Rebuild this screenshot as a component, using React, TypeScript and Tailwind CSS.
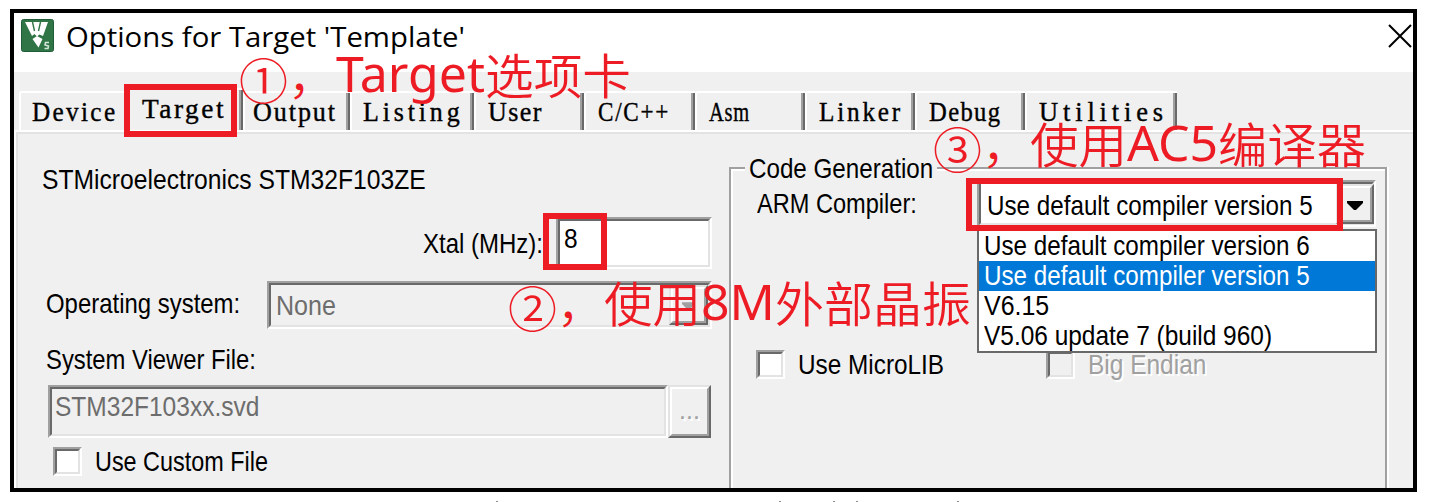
import React, { useLayoutEffect, useRef, useState } from "react";

const SANS = "font-['Liberation_Sans',Arial,sans-serif]";
const NOTE = "font-['Noto_Sans','Noto_Sans_CJK_SC',sans-serif]";
const CJK = "font-['Noto_Sans_CJK_SC',sans-serif]";
const SERIF = "font-['Liberation_Serif',serif]";

/* One line of text condensed or stretched horizontally to a given width. */
function Fit({ w, children, className = "" }: { w: number; children: string; className?: string }) {
  const ref = useRef<HTMLSpanElement>(null);
  const [k, setK] = useState(1);
  useLayoutEffect(() => {
    if (ref.current) setK(w / ref.current.offsetWidth);
  }, [w]);
  return (
    <span className={`block shrink-0 whitespace-nowrap ${className}`} style={{ width: w }}>
      <span ref={ref} className="inline-block origin-left whitespace-nowrap" style={{ transform: `scaleX(${k})` }}>
        {children}
      </span>
    </span>
  );
}

const label = `${SANS} text-[28px] leading-[30px]`;

function Sunken({ className = "", children }: { className?: string; children?: React.ReactNode }) {
  return (
    <div className={`border-2 border-t-[#a0a0a0] border-l-[#a0a0a0] border-b-white border-r-white ${className}`}>
      <div className="flex h-full w-full border-2 border-t-[#696969] border-l-[#696969] border-b-[#e3e3e3] border-r-[#e3e3e3]">
        {children}
      </div>
    </div>
  );
}

function Raised({ className = "", children }: { className?: string; children?: React.ReactNode }) {
  return (
    <div className={`shrink-0 border-2 border-t-[#e3e3e3] border-l-[#e3e3e3] border-b-[#696969] border-r-[#696969] ${className}`}>
      <div className="flex h-full w-full items-center justify-center border-2 border-t-white border-l-white border-b-[#a0a0a0] border-r-[#a0a0a0] bg-[#f0f0f0]">
        {children}
      </div>
    </div>
  );
}

function Arrow({ className }: { className: string }) {
  return (
    <svg viewBox="0 0 16 9" className={`shrink-0 ${className}`}>
      <path d="M0 0H16V2L9 9H7L0 2Z" fill="currentColor" />
    </svg>
  );
}

const tabs = [
  { name: "Device", cell: "w-[106px] pl-[11px] tracking-[2.5px]", w: 85 },
  { name: "Target", cell: "w-[118px] pl-[15px] tracking-[2.5px]", w: 84 },
  { name: "Output", cell: "w-[107px] pl-[8px] tracking-[2px]", w: 84 },
  { name: "Listing", cell: "w-[124px] pl-[11px] tracking-[4px]", w: 101 },
  { name: "User", cell: "w-[110px] pl-[12px] tracking-[1.5px]", w: 55 },
  { name: "C/C++", cell: "w-[111px] pl-[12px] tracking-[2px]", w: 72 },
  { name: "Asm", cell: "w-[110px] pl-[12px] tracking-[1px]", w: 41 },
  { name: "Linker", cell: "w-[110px] pl-[12px] tracking-[3px]", w: 84 },
  { name: "Debug", cell: "w-[110px] pl-[12px] tracking-[1.5px]", w: 72 },
  { name: "Utilities", cell: "w-[152px] pl-[12px] tracking-[5px]", w: 129 },
];

function Tabs() {
  return (
    <div className="flex h-[58px] items-end pl-[5px]">
      {tabs.map((t) => {
        const on = t.name === "Target";
        return (
          <div
            key={t.name}
            className={`shrink-0 rounded-tl-[3px] border-t-2 border-l-2 border-white ${on ? "h-[42px]" : "h-[39px]"} ${t.cell} ${
              t.name === "Device" ? "" : "shadow-[inset_-2px_0_0_#696969,inset_-4px_0_0_#a0a0a0]"
            }`}
          >
            <Fit w={t.w} className={`${SERIF} pt-[5px] text-[27px] leading-[28px] text-black [-webkit-text-stroke:0.4px_#000]`}>
              {t.name}
            </Fit>
          </div>
        );
      })}
    </div>
  );
}

function Logo() {
  return (
    <svg width="33" height="33" viewBox="0 0 33 33" className="shrink-0">
      <rect x="0.5" y="0.5" width="32" height="32" rx="2" fill="#2f7546" stroke="#1f5c37" />
      <path d="M4 3H27L22 17L18.500 15.500L16 17.500L13.500 15L11 17Z" fill="#fff" />
      <path d="M11.500 3L13.500 12M19.500 3L17.500 12" stroke="#2f7546" strokeWidth="1.400" />
      <path d="M11.500 20L16 17L21.500 20L17.500 28.500Z" fill="#fff" />
      <path d="M28 23.500H24.500L24 26L27.500 27L27 29.500H23.500" fill="none" stroke="#d3e6d9" strokeWidth="1.500" />
    </svg>
  );
}

function LeftColumn() {
  return (
    <div className="w-[713px] shrink-0">
      <div className="pt-[33px] pl-[26px]">
        <Fit w={384} className={label}>STMicroelectronics STM32F103ZE</Fit>
      </div>
      <div className="mt-[22px] flex pl-[407px]">
        <Fit w={120} className={`${label} mt-[12px]`}>Xtal (MHz):</Fit>
        <Sunken className="ml-[13px] h-[52px] w-[156px] bg-white">
          <Fit w={14} className={`${label} mt-[3px] ml-[4px]`}>8</Fit>
        </Sunken>
      </div>
      <div className="mt-[12px] flex pl-[30px]">
        <Fit w={194} className={`${label} mt-[8px]`}>Operating system:</Fit>
        <Sunken className="ml-[27px] h-[48px] w-[445px]">
          <Fit w={60} className={`${label} mt-[6px] ml-[5px] text-[#6d6d6d]`}>None</Fit>
          <Raised className="ml-auto h-full w-[39px]">
            <Arrow className="mt-[2px] h-[8px] w-[13px] text-[#a0a0a0]" />
          </Raised>
        </Sunken>
      </div>
      <div className="pt-[16px] pl-[30px]">
        <Fit w={210} className={label}>System Viewer File:</Fit>
      </div>
      <div className="mt-[10px] flex pl-[32px]">
        <Sunken className="h-[53px] w-[620px]">
          <Fit w={204} className={`${label} mt-[3px] ml-[3px] text-[#6d6d6d]`}>STM32F103xx.svd</Fit>
        </Sunken>
        <Raised className="h-[53px] w-[43px]">
          <span className={`${SANS} -mt-[4px] text-[25px] leading-[30px] text-[#a0a0a0] [text-shadow:2px_2px_0_#fff]`}>...</span>
        </Raised>
      </div>
      <div className="mt-[9px] flex pl-[37px]">
        <Sunken className="h-[29px] w-[29px] bg-white" />
        <Fit w={173} className={`${label} ml-[13px]`}>Use Custom File</Fit>
      </div>
    </div>
  );
}

const options = [
  { text: "Use default compiler version 6", w: 326, row: "text-black" },
  { text: "Use default compiler version 5", w: 326, row: "bg-[#0078d7] text-white" },
  { text: "V6.15", w: 65, row: "text-black" },
  { text: "V5.06 update 7 (build 960)", w: 288, row: "text-black" },
];

function CodeGeneration() {
  return (
    <div className="relative mt-[35px] h-[330px] w-[658px] shrink-0 border-2 border-b-0 border-[#a0a0a0] shadow-[inset_2px_2px_0_#fff,2px_0_0_#fff]">
      <div className="absolute top-[-8px] left-[14px] bg-[#f0f0f0] px-[4px]">
        <Fit w={184} className={`${label} -mt-[7px]`}>Code Generation</Fit>
      </div>
      <div className="flex pt-[11px] pl-[26px]">
        <Fit w={160} className={`${label} mt-[9px]`}>ARM Compiler:</Fit>
        <Sunken className="ml-[60px] h-[47px] w-[399px] bg-white">
          <Fit w={326} className={`${label} mt-[7px] ml-[6px]`}>Use default compiler version 5</Fit>
          <Raised className="-mr-[2px] ml-auto h-[40px] w-[38px]">
            <Arrow className="mt-[2px] h-[9px] w-[16px] text-black" />
          </Raised>
        </Sunken>
      </div>
      <div className="flex pt-[123px] pl-[25px]">
        <Sunken className="h-[29px] w-[29px] bg-white" />
        <Fit w={146} className={`${label} ml-[13px]`}>Use MicroLIB</Fit>
        <Sunken className="ml-[102px] h-[29px] w-[29px]" />
        <Fit w={118} className={`${label} ml-[13px] text-[#a0a0a0] [text-shadow:2px_2px_0_#fff]`}>Big Endian</Fit>
      </div>
      <div className="absolute top-[60px] left-[246px] w-[400px] border-2 border-[#696969] bg-white">
        {options.map((o) => (
          <div key={o.text} className={`h-[30px] pl-[5px] ${o.row}`}>
            <Fit w={o.w} className={label}>{o.text}</Fit>
          </div>
        ))}
      </div>
    </div>
  );
}

const numeral = `${CJK} font-[350] text-[48px] pt-[5px]`;
const hanzi = `${CJK} font-[350] text-[48px]`;
const latin = `${NOTE} text-[50px]`;

const notes: { place: string; parts: [string, number, string][] }[] = [
  {
    place: "left-[239px] top-[43px]",
    parts: [["①", 49, numeral], ["，", 48, hanzi], ["Target", 149, latin], ["选项卡", 146, hanzi]],
  },
  {
    place: "left-[508px] top-[271px]",
    parts: [["②", 49, numeral], ["，", 47, hanzi], ["使用", 97, hanzi], ["8M", 74, latin], ["外部晶振", 196, hanzi]],
  },
  {
    place: "left-[933px] top-[112px]",
    parts: [["③", 49, numeral], ["，", 48, hanzi], ["使用", 97, hanzi], ["AC5", 91, latin], ["编译器", 148, hanzi]],
  },
];

export default function App() {
  return (
    <div className="relative h-[502px] w-[1440px] overflow-hidden bg-white pt-[9px] pl-[10px] text-black">
      <div className="h-[483px] w-[1407px] overflow-hidden border-4 border-black bg-[#f0f0f0]">
        <div className="flex h-[59px] bg-white pt-[6px] pl-[7px]">
          <Logo />
          <Fit w={399} className="-mt-px ml-[12px] font-['Open_Sans',sans-serif] text-[28px] leading-[36px]">
            Options for Target 'Template'
          </Fit>
          <svg width="24" height="24" viewBox="0 0 24 24" className="mt-[5px] mr-[1px] ml-auto">
            <path d="M1 1L23 23M23 1L1 23" stroke="#000" strokeWidth="2" />
          </svg>
        </div>
        <Tabs />
        <div className="flex h-[358px] border-t-2 border-l-2 border-white shadow-[inset_2px_2px_0_#e3e3e3]">
          <LeftColumn />
          <CodeGeneration />
        </div>
      </div>
      <svg width="1430" height="1" viewBox="10 0 1430 1" className="mt-[9px]">
        <path d="M496 0.500h2M779 0.500h2M833 0.500h2M856 0.500h2M957 0.500h2" stroke="#8a8a8a" />
      </svg>

      <div className="absolute top-[84px] left-[124px] h-[53px] w-[113px] border-[6px] border-[#ed1c24]" />
      <div className="absolute top-[213px] left-[543px] h-[57px] w-[64px] border-[6px] border-[#ed1c24]" />
      <div className="absolute top-[178px] left-[966px] h-[53px] w-[377px] border-[6px] border-[#ed1c24]" />
      {notes.map((n) => (
        <div key={n.place} className={`absolute flex text-[#ed1c24] ${n.place}`}>
          {n.parts.map(([text, w, font]) => (
            <Fit key={text} w={w} className={`${font} leading-[60px]`}>
              {text}
            </Fit>
          ))}
        </div>
      ))}
    </div>
  );
}
